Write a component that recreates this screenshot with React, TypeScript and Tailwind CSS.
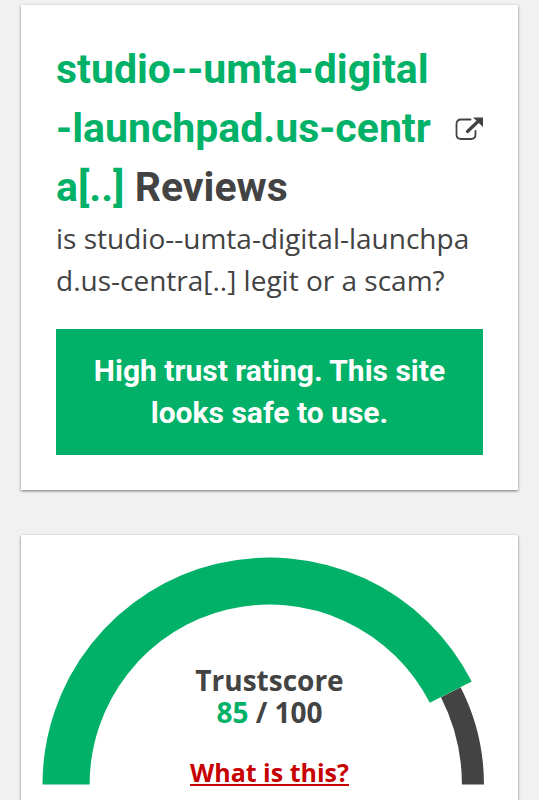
import type { ReactNode } from "react";

const SITE = "studio--umta-digital-launchpad.us-centra[..]";
const SCORE = 85;

// half circle gauge geometry, in viewBox units
const CENTER = 227;
const RADIUS = 203;

const pointAt = (percent: number) => {
  const angle = Math.PI * (1 - percent / 100);
  const x = CENTER + RADIUS * Math.cos(angle);
  const y = CENTER - RADIUS * Math.sin(angle);
  return `${x.toFixed(2)} ${y.toFixed(2)}`;
};

const arc = (from: number, to: number) =>
  `M ${pointAt(from)} A ${RADIUS} ${RADIUS} 0 0 1 ${pointAt(to)}`;

type CardProps = {
  className: string;
  children: ReactNode;
};

const Card = ({ className, children }: CardProps) => (
  <section
    className={`bg-white shadow-[0_1px_3px_rgba(0,0,0,0.3),0_1px_2px_rgba(0,0,0,0.25)] ${className}`}
  >
    {children}
  </section>
);

const ExternalIcon = () => (
  <svg viewBox="0 0 28 24" className="h-6 w-7" fill="none" aria-hidden="true">
    <path
      d="M15.500 2.500H6Q1.500 2.500 1.500 7V17.500Q1.500 22 6 22H16Q20.500 22 20.500 17.500V14"
      stroke="#434343"
      strokeWidth="1.800"
      strokeLinecap="round"
    />
    <path d="M12.500 14.500L22.500 5" stroke="#434343" strokeWidth="3.200" strokeLinecap="round" />
    <path d="M18 .5H28V10Z" fill="#434343" />
  </svg>
);

const Gauge = ({ score }: { score: number }) => (
  <svg viewBox="0 0 454 227" className="col-start-1 row-start-1 w-full" fill="none" aria-hidden="true">
    <path d={arc(score, 100)} stroke="#434343" strokeWidth="22" />
    <path d={arc(0, score)} stroke="#02b168" strokeWidth="47" />
  </svg>
);

const App = () => {
  return (
    <main className="flex min-h-screen flex-col gap-[45px] bg-[#f1f1f1] px-[21px] pt-[5px] font-['Open_Sans',sans-serif] text-[#434343]">
      <Card className="p-[35px]">
        <div className="flex items-center justify-between">
          <h1 className="font-['Roboto',sans-serif] text-[41px] leading-[59px] font-bold">
            <span className="text-[#02b168]">
              studio--umta-digital
              <br />
              -launchpad.us-centr
              <br />
              a[..]
            </span>{" "}
            Reviews
          </h1>
          <a href="#visit" aria-label={`Visit ${SITE}`} className="shrink-0">
            <ExternalIcon />
          </a>
        </div>
        <p className="text-[28px] leading-[42px] break-all">
          is studio--umta-digital-launchpa
          <br />
          d.us-centra[..] legit or a scam?
        </p>
        <p className="mt-7 bg-[#02b168] px-6 py-[21px] text-center font-['Roboto',sans-serif] text-[30px] leading-[42px] font-bold text-white">
          High trust rating. This site looks safe to use.
        </p>
      </Card>

      <Card className="flex-1 px-[21px] pt-[22px]">
        <div className="grid">
          <Gauge score={SCORE} />
          <div className="col-start-1 row-start-1 flex flex-col items-center pt-[107px] font-bold">
            <h2 className="text-[28px] leading-8">Trustscore</h2>
            <p className="text-[28px] leading-8">
              <span className="text-[#02b168]">{SCORE}</span> / 100
            </p>
            <a href="#trustscore" className="mt-7 text-[25px] leading-8 text-[#c70000] underline">
              What is this?
            </a>
          </div>
        </div>
      </Card>
    </main>
  );
};

export default App;
